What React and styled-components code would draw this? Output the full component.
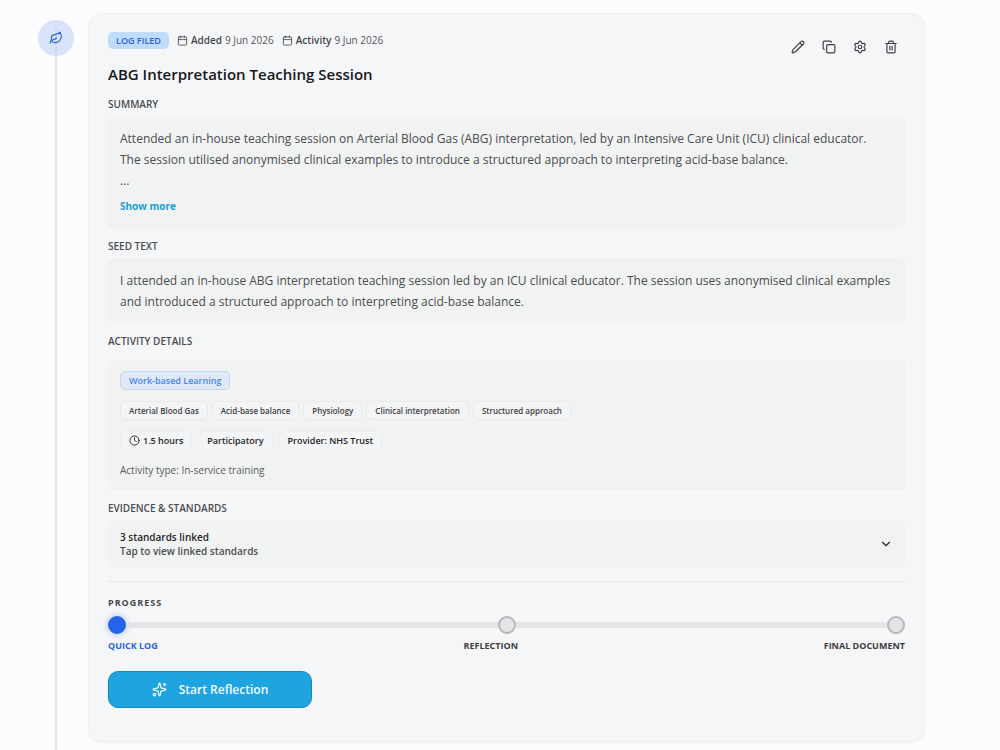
import { useState } from 'react';
import styled, { createGlobalStyle } from 'styled-components';
import { Calendar, ChevronDown, Clock, Copy, Leaf, Pencil, Settings, Sparkles, Trash2 } from 'lucide-react';

const GlobalStyle = createGlobalStyle`
    * {
        box-sizing: border-box;
    }
    body {
        margin: 0;
        background: #fbfcfe;
        color: #18191b;
        font-family: "Open Sans", "Noto Sans", sans-serif;
        font-size: 12px;
    }
    h1, h2, p, ul, ol {
        margin: 0;
        padding: 0;
    }
    ul, ol {
        list-style: none;
    }
    button {
        font-family: inherit;
        cursor: pointer;
    }
`

const Timeline = styled.main`
    display: grid;
    grid-template-columns: 36px minmax(0, 1fr);
    column-gap: 14px;
    min-height: 100vh;
    padding: 0 75px 0 38px;
`

const Rail = styled.div`
    display: flex;
    flex-direction: column;
    align-items: center;
    padding-top: 20px;
`

/* the line starts under the dot and shows through it */
const RailLine = styled.div`
    flex: 1;
    width: 2px;
    margin-top: -28px;
    background: #e5e6e9;
`

const RailDot = styled.div`
    position: relative;
    display: flex;
    align-items: center;
    justify-content: center;
    width: 36px;
    height: 36px;
    border-radius: 50%;
    background: rgba(190, 207, 248, 0.55);
    color: #2f62e0;
`

const Card = styled.article`
    align-self: start;
    margin: 13px 0 8px;
    padding: 18px 19px 33px;
    border: 1px solid #f0f1f3;
    border-radius: 14px;
    background: #f5f6f8;
    box-shadow: 0 1px 3px rgba(20, 30, 50, 0.04);
`

const CardHeader = styled.header`
    display: flex;
    justify-content: space-between;
`

const MetaRow = styled.div`
    display: flex;
    align-items: flex-start;
    gap: 8px;
    height: 18px;
`

const Status = styled.span`
    padding: 0 8px;
    border-radius: 5px;
    background: #bfdbfe;
    color: #2c62dc;
    font-size: 9px;
    font-weight: 600;
    line-height: 17px;
`

const MetaItem = styled.span`
    display: flex;
    align-items: center;
    gap: 3px;
    color: #55575b;
    font-size: 10px;
    line-height: 16px;
    strong {
        color: #45474b;
        font-weight: 600;
    }
`

const Title = styled.h1`
    margin-top: 12px;
    font-size: 15px;
    font-weight: 600;
    line-height: 24px;
`

const Actions = styled.div`
    display: flex;
    gap: 7px;
    padding: 3px 2px 0 0;
    height: 28px;
`

const IconButton = styled.button`
    display: flex;
    align-items: center;
    justify-content: center;
    width: 24px;
    height: 24px;
    padding: 0;
    border: 0;
    background: none;
    color: #3c3e41;
`

const Section = styled.section`
    margin-top: 11px;
`

const SectionTitle = styled.h2`
    margin-bottom: ${props => props.$wide ? 12 : 6}px;
    color: #4b4d51;
    font-size: 10px;
    font-weight: 600;
    line-height: 14px;
`

const Panel = styled.div`
    padding: 10px 11px;
    border: 1px solid #eef0f0;
    border-radius: 5px;
    background: #f1f3f3;
`

const Text = styled.p`
    color: #4a4c4f;
    font-size: 12px;
    line-height: 21px;
`

const ShowMore = styled.button`
    display: block;
    margin: 6px 0 2px;
    padding: 0;
    border: 0;
    background: none;
    color: #1b9ddb;
    font-size: 10px;
    font-weight: 700;
    line-height: 18px;
`

const Tags = styled.ul`
    display: flex;
    flex-wrap: wrap;
    gap: ${props => props.$gap || 4}px;
    margin-bottom: 11px;
`

const Tag = styled.li`
    display: flex;
    align-items: center;
    gap: 3px;
    height: 19px;
    padding: 0 8px;
    border: 1px solid #e7e9ea;
    border-radius: 5px;
    background: #f3f4f5;
    color: #3f4144;
    font-size: 8px;
    font-weight: 600;
`

const CategoryTag = styled(Tag)`
    border-color: #c3d6f7;
    background: #e1e9f7;
    color: #4485f3;
    font-size: 9px;
`

const FactTag = styled(Tag)`
    border-color: #eaeced;
    color: #242628;
    font-size: 9px;
`

const ActivityType = styled.p`
    color: #5a5c60;
    font-size: 10px;
    line-height: 18px;
`

const StandardsToggle = styled.button`
    display: flex;
    align-items: center;
    justify-content: space-between;
    width: 100%;
    padding: 8px 11px;
    border: 1px solid #eef0f0;
    border-radius: 5px;
    background: #f1f3f3;
    color: #242628;
    font-size: 10px;
    font-weight: 600;
    line-height: 14px;
    text-align: left;
    small {
        display: block;
        color: #4b4d51;
        font-size: 10px;
    }
`

const Progress = styled.section`
    margin-top: 14px;
    padding-top: 14px;
    border-top: 1px solid #e7e8ea;
`

const ProgressTitle = styled.h2`
    color: #45474b;
    font-size: 9px;
    font-weight: 700;
    letter-spacing: 1px;
    line-height: 14px;
`

const Track = styled.div`
    display: flex;
    align-items: center;
    margin-top: 6px;
`

const TrackLine = styled.div`
    flex: 1;
    height: 6px;
    background: #e3e4e6;
`

const Stop = styled.div`
    width: 18px;
    height: 18px;
    border: 2px solid ${props => props.$active ? '#2563eb' : '#b5b6b9'};
    border-radius: 50%;
    background: ${props => props.$active ? '#2563eb' : '#e3e4e6'};
    box-shadow: ${props => props.$active ? '0 0 5px 2px rgba(37, 99, 235, 0.2)' : 'none'};
`

const Steps = styled.ol`
    display: flex;
    justify-content: space-between;
    margin-top: 5px;
`

const Step = styled.li`
    color: ${props => props.$active ? '#2c62dc' : '#3c3e41'};
    font-size: 9px;
    font-weight: 700;
    line-height: 14px;
`

const StartButton = styled.button`
    display: flex;
    align-items: center;
    justify-content: center;
    gap: 12px;
    width: 204px;
    height: 37px;
    margin-top: 18px;
    border: 1px solid #1787be;
    border-radius: 10px;
    background: #1ea4e1;
    color: #f5fbff;
    font-size: 12px;
    font-weight: 600;
`

const actions = [
    { label: 'Edit', Icon: Pencil },
    { label: 'Duplicate', Icon: Copy },
    { label: 'Settings', Icon: Settings },
    { label: 'Delete', Icon: Trash2 },
]

const tags = ['Arterial Blood Gas', 'Acid-base balance', 'Physiology', 'Clinical interpretation', 'Structured approach']

export default function App() {
    const [isOpen, setIsOpen] = useState(false)

    return (
        <>
            <GlobalStyle />
            <Timeline>
                <Rail>
                    <RailDot><Leaf size={14} /></RailDot>
                    <RailLine />
                </Rail>
                <Card>
                    <CardHeader>
                        <div>
                            <MetaRow>
                                <Status>LOG FILED</Status>
                                <MetaItem><Calendar size={11} /><strong>Added</strong> 9 Jun 2026</MetaItem>
                                <MetaItem><Calendar size={11} /><strong>Activity</strong> 9 Jun 2026</MetaItem>
                            </MetaRow>
                            <Title>ABG Interpretation Teaching Session</Title>
                        </div>
                        <Actions>
                            {actions.map(({ label, Icon }) => (
                                <IconButton key={label} aria-label={label}><Icon size={14} /></IconButton>
                            ))}
                        </Actions>
                    </CardHeader>

                    <Section>
                        <SectionTitle>SUMMARY</SectionTitle>
                        <Panel>
                            <Text>Attended an in-house teaching session on Arterial Blood Gas (ABG) interpretation, led by an Intensive Care Unit (ICU) clinical educator.</Text>
                            <Text>The session utilised anonymised clinical examples to introduce a structured approach to interpreting acid-base balance.</Text>
                            <Text>...</Text>
                            <ShowMore>Show more</ShowMore>
                        </Panel>
                    </Section>

                    <Section>
                        <SectionTitle>SEED TEXT</SectionTitle>
                        <Panel>
                            <Text>
                                I attended an in-house ABG interpretation teaching session led by an ICU clinical educator. The session uses anonymised clinical examples and introduced a structured approach to interpreting acid-base balance.
                            </Text>
                        </Panel>
                    </Section>

                    <Section>
                        <SectionTitle $wide>ACTIVITY DETAILS</SectionTitle>
                        <Panel>
                            <Tags>
                                <CategoryTag>Work-based Learning</CategoryTag>
                            </Tags>
                            <Tags>
                                {tags.map(tag => <Tag key={tag}>{tag}</Tag>)}
                            </Tags>
                            <Tags $gap={6}>
                                <FactTag><Clock size={11} />1.5 hours</FactTag>
                                <FactTag>Participatory</FactTag>
                                <FactTag>Provider: NHS Trust</FactTag>
                            </Tags>
                            <ActivityType>Activity type: In-service training</ActivityType>
                        </Panel>
                    </Section>

                    <Section>
                        <SectionTitle>EVIDENCE &amp; STANDARDS</SectionTitle>
                        <StandardsToggle aria-expanded={isOpen} onClick={() => setIsOpen(!isOpen)}>
                            <span>3 standards linked<small>Tap to view linked standards</small></span>
                            <ChevronDown size={14} />
                        </StandardsToggle>
                    </Section>

                    <Progress>
                        <ProgressTitle>PROGRESS</ProgressTitle>
                        <Track>
                            <Stop $active />
                            <TrackLine />
                            <Stop />
                            <TrackLine />
                            <Stop />
                        </Track>
                        <Steps>
                            <Step $active>QUICK LOG</Step>
                            <Step>REFLECTION</Step>
                            <Step>FINAL DOCUMENT</Step>
                        </Steps>
                    </Progress>

                    <StartButton><Sparkles size={15} />Start Reflection</StartButton>
                </Card>
            </Timeline>
        </>
    )
}
